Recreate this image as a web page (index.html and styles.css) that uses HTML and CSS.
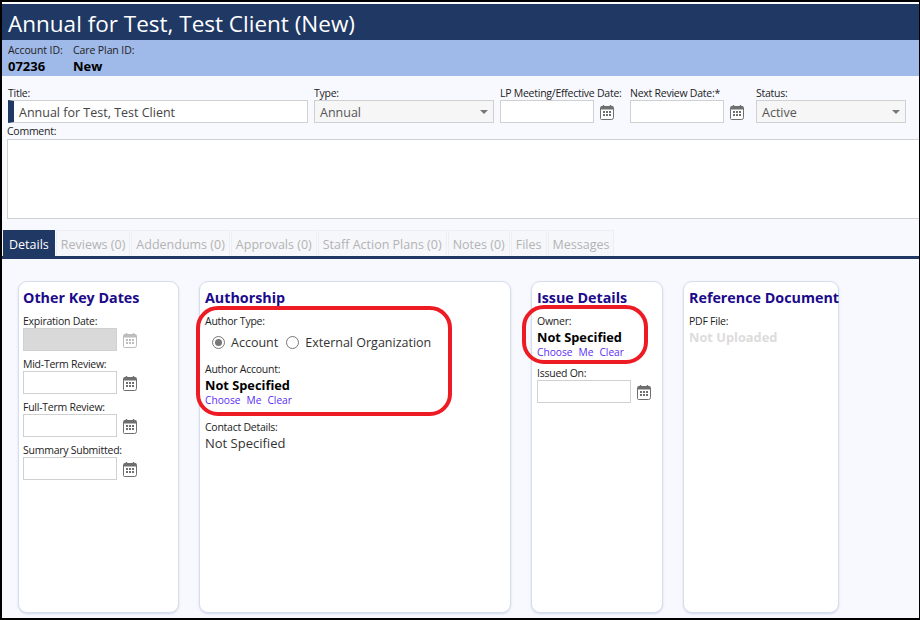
FILE: index.html
```html
<!DOCTYPE html>
<html lang="en">
<head>
<meta charset="utf-8">
<title>Annual for Test, Test Client (New)</title>
<link rel="stylesheet" href="styles.css">
</head>
<body>
<svg class="defs" width="0" height="0" aria-hidden="true">
  <symbol id="cal" viewBox="0 0 14 16">
    <path d="M1.5 2.500h11a1 1 0 0 1 1 1v10a2 2 0 0 1-2 2h-10a1 1 0 0 1-1-1v-11a1 1 0 0 1 1-1z" fill="#fff" stroke="currentColor"/>
    <path d="M1 2.500h12v3H1z" fill="currentColor"/>
    <path d="M3.500 1v2M10.500 1v2" stroke="currentColor" stroke-width="1.4"/>
    <path d="M3 7h2v2H3zM6 7h2v2H6zM9 7h2v2H9zM3 10h2v2H3zM6 10h2v2H6zM9 10h2v2H9z" fill="currentColor"/>
  </symbol>
</svg>
<div class="frame">
  <header class="titlebar">Annual for Test, Test Client (New)</header>
  <section class="idbar">
    <div class="idcol idcol-account"><span class="lbl">Account ID:</span><strong>07236</strong></div>
    <div class="idcol"><span class="lbl">Care Plan ID:</span><strong>New</strong></div>
  </section>
  <section class="form">
    <div class="row">
      <div class="field f-title"><label class="lbl">Title:</label><div class="input title-input">Annual for Test, Test Client</div></div>
      <div class="field f-type"><label class="lbl">Type:</label><div class="input select">Annual<i class="arrow"></i></div></div>
      <div class="field f-date1"><label class="lbl">LP Meeting/Effective Date:</label><div class="dateline"><div class="input date"></div><svg class="cal"><use href="#cal"/></svg></div></div>
      <div class="field f-date2"><label class="lbl">Next Review Date:*</label><div class="dateline"><div class="input date"></div><svg class="cal"><use href="#cal"/></svg></div></div>
      <div class="field f-status"><label class="lbl">Status:</label><div class="input select">Active<i class="arrow"></i></div></div>
    </div>
    <label class="lbl comment-lbl">Comment:</label>
    <div class="comment"></div>
  </section>
  <nav class="tabs">
    <span class="tab active">Details</span>
    <span class="tab">Reviews (0)</span>
    <span class="tab">Addendums (0)</span>
    <span class="tab">Approvals (0)</span>
    <span class="tab">Staff Action Plans (0)</span>
    <span class="tab">Notes (0)</span>
    <span class="tab">Files</span>
    <span class="tab">Messages</span>
  </nav>
  <main class="cards">
    <article class="card c1">
      <h2>Other Key Dates</h2>
      <label class="lbl">Expiration Date:</label>
      <div class="dateline"><div class="input date disabled"></div><svg class="cal faded"><use href="#cal"/></svg></div>
      <label class="lbl">Mid-Term Review:</label>
      <div class="dateline"><div class="input date"></div><svg class="cal"><use href="#cal"/></svg></div>
      <label class="lbl">Full-Term Review:</label>
      <div class="dateline"><div class="input date"></div><svg class="cal"><use href="#cal"/></svg></div>
      <label class="lbl">Summary Submitted:</label>
      <div class="dateline"><div class="input date"></div><svg class="cal"><use href="#cal"/></svg></div>
    </article>
    <article class="card c2">
      <h2>Authorship</h2>
      <label class="lbl">Author Type:</label>
      <div class="radios">
        <span class="radio on"></span><span class="radio-text">Account</span>
        <span class="radio"></span><span class="radio-text">External Organization</span>
      </div>
      <label class="lbl">Author Account:</label>
      <div class="value">Not Specified</div>
      <div class="links"><a>Choose</a><a>Me</a><a>Clear</a></div>
      <label class="lbl contact-lbl">Contact Details:</label>
      <div class="plain">Not Specified</div>
      <div class="mark mark-author"></div>
    </article>
    <article class="card c3">
      <h2>Issue Details</h2>
      <label class="lbl">Owner:</label>
      <div class="value">Not Specified</div>
      <div class="links"><a>Choose</a><a>Me</a><a>Clear</a></div>
      <label class="lbl issued-lbl">Issued On:</label>
      <div class="dateline"><div class="input date"></div><svg class="cal"><use href="#cal"/></svg></div>
      <div class="mark mark-owner"></div>
    </article>
    <article class="card c4">
      <h2>Reference Document</h2>
      <label class="lbl">PDF File:</label>
      <div class="value muted">Not Uploaded</div>
    </article>
  </main>
</div>
</body>
</html>
```
FILE: styles.css
```css
* { box-sizing: border-box; }
html, body { margin: 0; padding: 0; }
body { width: 920px; height: 620px; overflow: hidden; background: #000; font-family: "Open Sans", "Noto Sans", sans-serif; color: #222; }
.defs { position: absolute; }
.frame { width: 917px; height: 616px; margin: 2px 0 0 2px; background: #f8f9ff; border-top: 2px solid #fff; display: flex; flex-direction: column; overflow: hidden; }
.titlebar { height: 36px; background: #1f3864; color: #fff; font-size: 22.500px; line-height: 40px; padding-left: 6px; white-space: nowrap; flex: none; }
.idbar { height: 36px; background: #9fb9e8; display: flex; padding: 3px 0 0 6px; flex: none; }
.idcol { display: flex; flex-direction: column; }
.idcol-account { width: 65px; }
.idcol strong { font-size: 13px; line-height: 18px; color: #000; }
.idcol .lbl { letter-spacing: -0.1px; }
.lbl { display: block; font-size: 10.500px; line-height: 14px; letter-spacing: -0.25px; color: #222; white-space: nowrap; }
.form { height: 154px; padding-top: 10px; flex: none; }
.row { display: flex; height: 39px; padding-left: 6px; }
.field { flex: none; }
.f-title { width: 306px; }
.f-type { width: 186px; }
.f-date1 { width: 130px; }
.f-date2 { width: 126px; }
.f-status { width: 150px; }
.input { height: 23px; background: #fff; border: 1px solid #d0d0d0; font-size: 12.500px; line-height: 24px; color: #444; white-space: nowrap; }
.title-input { width: 300px; border-left: 6px solid #1f3864; padding-left: 5px; }
.select { background: #f6f6f6; padding-left: 5px; position: relative; width: 180px; color: #555; }
.f-status .select { width: 150px; }
.arrow { position: absolute; right: 5px; top: 9px; border-left: 4px solid transparent; border-right: 4px solid transparent; border-top: 4px solid #777; }
.dateline { display: flex; align-items: center; }
.date { width: 94px; }
.cal { width: 14px; height: 16px; margin-left: 6px; color: #6f6f6f; flex: none; }
.cal.faded { color: #bdbdbd; }
.disabled { background: #d9d9d9; }
.comment-lbl { margin: -1px 0 0 5px; height: 14px; }
.comment { height: 80px; margin: 1px -10px 0 5px; background: #fff; border: 1px solid #d0d0d0; }
.tabs { display: flex; height: 29px; padding: 0 0 0 1px; gap: 1px; border-bottom: 3px solid #1f3864; flex: none; }
.tab { display: block; height: 26px; padding: 0 4px; line-height: 27px; font-size: 12.500px; color: #b3b3b3; background: #f6f7fb; border: 1px solid #eceef3; border-bottom: 0; white-space: nowrap; }
.tab.active { background: #1f3864; color: #fff; border-color: #1f3864; padding: 0 5px; }
.cards { display: flex; gap: 20px; padding: 22px 0 0 16px; flex: none; }
.card { height: 332px; background: #fff; border: 1px solid #d8dded; box-shadow: 0 1px 2px rgba(170, 185, 215, .5); border-radius: 9px; padding: 7px 5px 0; position: relative; flex: none; }
.c1 { width: 161px; padding-left: 4px; }
.c2 { width: 312px; }
.c3 { width: 132px; }
.c4 { width: 156px; }
h2 { margin: 0 0 7px; font-size: 14.300px; line-height: 18px; color: #1b0a8a; font-weight: 700; white-space: nowrap; }
.card .dateline { margin-bottom: 6px; }
.radios { display: flex; align-items: center; height: 26px; padding-left: 7px; margin: 1px 0 7px; }
.radio { width: 13px; height: 13px; border-radius: 50%; border: 1px solid #767676; background: #fff; margin-right: 6px; flex: none; position: relative; }
.radio.on { border-color: #777; }
.radio.on::after { content: ""; position: absolute; left: 2px; top: 2px; width: 7px; height: 7px; border-radius: 50%; background: #777; }
.radio-text { font-size: 12.500px; color: #333; margin-right: 8px; white-space: nowrap; }
.value { font-size: 12.800px; line-height: 18px; font-weight: 700; color: #000; white-space: nowrap; }
.value.muted { color: #dcdcdc; }
.links { display: flex; gap: 6px; font-size: 10.200px; line-height: 13px; color: #5a2cf5; }
.contact-lbl { margin-top: 13px; }
.issued-lbl { margin-top: 7px; }
.plain { font-size: 13px; line-height: 18px; color: #333; }
.mark { position: absolute; border: 4px solid #ed1c24; border-radius: 22px; pointer-events: none; }
.mark-author { left: -4px; top: 24px; width: 256px; height: 110px; }
.mark-owner { left: -10px; top: 23px; width: 126px; height: 59px; }
```
